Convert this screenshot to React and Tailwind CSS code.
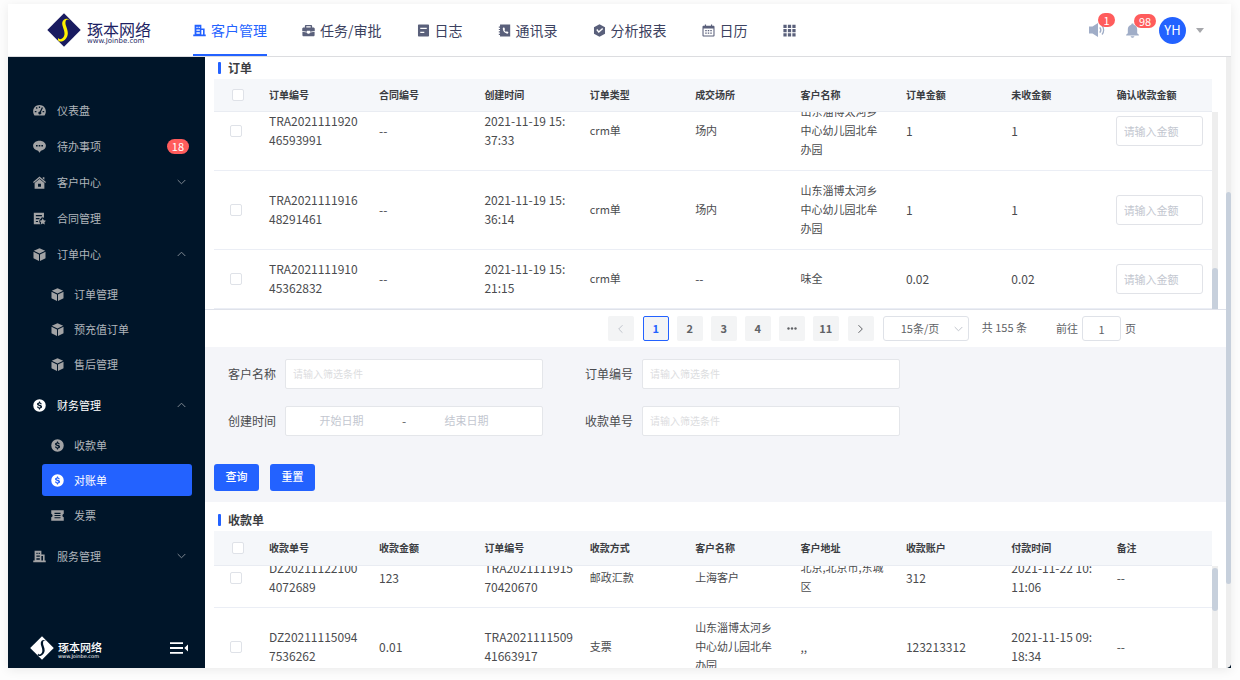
import { useState } from 'react';

const Svg = ({ size = 13, className = '', children }) => (
  <svg width={size} height={size} viewBox="0 0 16 16" fill="currentColor" className={`shrink-0 ${className}`} aria-hidden="true">{children}</svg>
);

const BuildingIcon = (p) => (
  <Svg {...p}><path fillRule="evenodd" d="M2 .8h8.300V5.500h4V13h1.400v2.200H.3V13H2V.8Zm2.200 2.500V5h1.500V3.300H4.200Zm2.700 0V5h1.500V3.300H6.900ZM4.200 6.800v1.600h4.200V6.800H4.200Zm0 3.500V12h4.200v-1.700H4.200Zm6.100-2.900V13h2v-5.600h-2Z" /></Svg>
);
const BriefcaseIcon = (p) => (
  <Svg {...p}><path fillRule="evenodd" d="M5 1.200h6c.8 0 1.500.7 1.500 1.500v1.600H14c1 0 1.700.7 1.700 1.600v2.700L10 9.600V8.300H6v1.300L.3 8.600V5.900c0-.9.7-1.600 1.700-1.600h1.500V2.700c0-.8.7-1.500 1.500-1.500Zm.3 1.700v1.400h5.400V2.900H5.300Z" /><path d="M.5 9.500 6 10.500c.3 1 1 1.500 2 1.500s1.700-.5 2-1.500l5.500-1v4.100c0 .9-.6 1.500-1.500 1.500H2c-.9 0-1.500-.6-1.500-1.500V9.500Z" /></Svg>
);
const NoteIcon = (p) => (
  <Svg {...p}><path fillRule="evenodd" d="M2.500.6h11c.8 0 1.300.5 1.300 1.300v12.200c0 .8-.5 1.300-1.300 1.300h-11c-.8 0-1.300-.5-1.300-1.300V1.900c0-.8.5-1.300 1.300-1.300ZM4 4.500V6h8V4.500H4Zm0 5V11h5V9.500H4Z" /></Svg>
);
const PhoneBookIcon = (p) => (
  <Svg {...p}><path fillRule="evenodd" d="M2.500.6H15v14.800H2.500v-1.900H1v-1.500h1.500v-1.500H1V9h1.500V7.500H1V6h1.500V4.500H1V3h1.500V.6ZM7.400 4 5.900 5c0 4 2.500 6.700 6 6.900l1-1.600-2-1.400-1.100.8c-1-.5-1.700-1.300-2-2.300l1-.9L7.400 4Z" /></Svg>
);
const ReportIcon = (p) => (
  <Svg {...p}><path fillRule="evenodd" d="M8 .3 14.800 4v8L8 15.700 1.200 12V4L8 .3Zm-4 7L7 11l5.500-5-1.200-1.100L7.200 8.500 5.400 6.300 4 7.300Z" /></Svg>
);
const CalendarIcon = (p) => (
  <Svg {...p}>
    <path fillRule="evenodd" d="M3.500.5H5V2h6V.5h1.500V2H14c.8 0 1.400.6 1.400 1.400V14c0 .8-.6 1.400-1.400 1.400H2C1.200 15.400.6 14.800.6 14V3.400C.6 2.600 1.200 2 2 2h1.500V.5ZM1.900 5.600v8.500h12.200V5.600H1.900Z" />
    <path d="M4 7.300h1.800v1.500H4zm3.100 0h1.800v1.500H7.100zm3.100 0H12v1.500h-1.800zM4 10.600h1.800v1.500H4zm3.100 0h1.800v1.500H7.100zm3.100 0H12v1.500h-1.800z" />
  </Svg>
);
const GridIcon = (p) => (
  <Svg {...p}><path d="M.5.8h4v4h-4zM6 .8h4v4H6zM11.500.8h4v4h-4zM.5 6.100h4v4h-4zM6 6.100h4v4H6zM11.500 6.100h4v4h-4zM.5 11.400h4v4h-4zM6 11.400h4v4H6zM11.500 11.400h4v4h-4z" /></Svg>
);
const DashboardIcon = (p) => (
  <Svg {...p}>
    <path fillRule="evenodd" d="M8 1.200c4.400 0 7.800 3.400 7.800 7.800 0 1.900-.6 3.600-1.600 5H1.800C.8 12.600.2 10.900.2 9 .2 4.600 3.600 1.200 8 1.200ZM7.200 3v2h1.600V3H7.200ZM3.400 4.800l1.300 1.300 1.100-1.100-1.300-1.300-1.100 1.100ZM2.200 8.500v1.600h2V8.500h-2Zm9.600 0v1.600h2V8.500h-2ZM10.900 4l-2.500 5.100a1.900 1.900 0 1 0 1.400.6L12.300 4.700 10.900 4Z" />
  </Svg>
);
const ChatIcon = (p) => (
  <Svg {...p}><path fillRule="evenodd" d="M8 .8c4.400 0 7.900 2.700 7.900 6.200 0 3.100-2.600 5.500-6.200 6.100L8 15.600l-1.700-2.500C2.700 12.500.1 10.100.1 7 .1 3.500 3.600.8 8 .8ZM3.700 6v2h2V6h-2ZM7 6v2h2V6H7Zm3.300 0v2h2V6h-2Z" /></Svg>
);
const HomeIcon = (p) => (
  <Svg {...p}><path d="M8 .5 16 7.300l-1 1.200L8 2.700 1 8.500 0 7.300 8 .5ZM12 1.500h2v3.200l-2-1.600V1.500Z" /><path fillRule="evenodd" d="m8 3.800 6 4.900v6.900H2V8.700l6-4.900ZM6.200 9.500v3.700h3.600V9.500H6.200Z" /></Svg>
);
const ContractIcon = (p) => (
  <Svg {...p}><path fillRule="evenodd" d="M1 .8h12.500v6.400L11 6.600 7.800 10v2l1 3.200H1V.8Zm2.500 3v1.400H11V3.800H3.500Zm0 3.600v1.400H8V7.400H3.500Zm0 3.600v1.400h2.700V11H3.500Z" /><path d="m12 7.800 1.300 2.500 2.700.4-1.900 2 .4 2.700-2.500-1.200-2.500 1.200.4-2.700-1.900-2 2.700-.4L12 7.800Z" /></Svg>
);
const CubeIcon = (p) => (
  <Svg {...p}><path d="m8 .2 7 3.100-7 3.500-7-3.500L8 .2ZM.6 4.500l6.800 3.400v8L.6 12.500v-8Zm14.800 0v8l-6.800 3.400v-8l6.800-3.400Z" /></Svg>
);
const CoinIcon = (p) => (
  <Svg {...p}><path fillRule="evenodd" d="M8 .3a7.700 7.700 0 1 1 0 15.400A7.700 7.700 0 0 1 8 .3Zm-.7 2.900v1C5.900 4.400 5 5.200 5 6.300c0 1.200.9 1.800 2.500 2.200 1.300.3 1.700.6 1.700 1.100s-.5.8-1.200.8c-.9 0-1.400-.4-1.500-1.100H4.900c.1 1.300 1 2.100 2.400 2.400v1.100h1.400v-1.100c1.500-.2 2.400-1 2.400-2.200 0-1.300-.9-1.900-2.700-2.300-1.100-.3-1.500-.5-1.500-1s.4-.7 1.100-.7c.8 0 1.200.3 1.300.9h1.600c-.1-1.100-.9-1.900-2.200-2.200v-1H7.300Z" /></Svg>
);
const TicketIcon = (p) => (
  <Svg {...p}><path fillRule="evenodd" d="M.3 1.500h15.400v4.300a2.300 2.300 0 0 0 0 4.400v4.300H.3v-4.300a2.300 2.300 0 0 0 0-4.400V1.500Zm4 3.200v1.400h7.400V4.700H4.300Zm0 2.700v1.300h7.400V7.400H4.300Zm0 2.700v1.400h7.400v-1.400H4.300Z" /></Svg>
);
const SpeakerIcon = () => (
  <Svg size={16}><path d="M0 4.500h3.500L9 1v14l-5.500-3.500H0v-7Z" /><path fill="none" stroke="currentColor" strokeWidth="1.300" d="M10.800 5.300c1.200 1.500 1.200 3.900 0 5.400M13 3.500c2.200 2.500 2.200 6.500 0 9" /></Svg>
);
const BellIcon = () => (
  <Svg size={15}><path d="M8 .5c.8 0 1.300.5 1.300 1.300C11.800 2.400 13 4.300 13 6.700V11l1.800 1.500v.8H1.200v-.8L3 11V6.700c0-2.400 1.200-4.300 3.700-4.900C6.700 1 7.200.5 8 .5ZM6 14h4c-.3 1-1 1.600-2 1.600S6.300 15 6 14Z" /></Svg>
);
const FoldIcon = () => (
  <svg width="18" height="12" viewBox="0 0 18 12" fill="currentColor" aria-hidden="true"><path d="M0 .2h13v1.800H0zM0 5.100h13v1.800H0zM0 10h13v1.800H0zM18 2.500v7L14.300 6 18 2.500Z" /></svg>
);
const DotsIcon = () => (
  <svg width="10" height="3" viewBox="0 0 10 3" fill="currentColor" className="mx-auto" aria-hidden="true"><circle cx="1.500" cy="1.500" r="1.200" /><circle cx="5" cy="1.500" r="1.200" /><circle cx="8.500" cy="1.500" r="1.200" /></svg>
);
const Chevron = ({ up, className = '' }) => (
  <svg width="9" height="6" viewBox="0 0 9 6" fill="none" stroke="currentColor" className={className} aria-hidden="true">
    <path d={up ? 'M.7 5 4.500 1.200 8.300 5' : 'M.7 1 4.500 4.800 8.300 1'} />
  </svg>
);

const LogoMark = ({ size, bg, ink }) => (
  <svg width={size} height={size} viewBox="0 0 34 34" className="shrink-0" aria-hidden="true">
    <path fill={bg} d="M17 .3 33.700 17 17 33.700.3 17Z" />
    <path fill={ink} d="M22.800 7.500C21 4.600 16.300 5 15.300 9.200c-.8 3.300 2.600 7.700 2.200 12-.3 3.100-2.600 5.300-4.800 4.900-.6-.1-.9-.6-.8-1.300-1.300 1-1.400 3.200.6 3.600 4 .8 8-3.200 8.300-7.700.3-4.600-3-8.600-2.300-12 .4-2.200 2.400-3 4.300-1.200Z" />
  </svg>
);

const navItems = [
  ['客户管理', BuildingIcon], ['任务/审批', BriefcaseIcon], ['日志', NoteIcon],
  ['通讯录', PhoneBookIcon], ['分析报表', ReportIcon], ['日历', CalendarIcon],
];

const menu = [
  { label: '仪表盘', icon: DashboardIcon },
  { label: '待办事项', icon: ChatIcon, badge: 18 },
  { label: '客户中心', icon: HomeIcon, arrow: 'down' },
  { label: '合同管理', icon: ContractIcon },
  { label: '订单中心', icon: CubeIcon, arrow: 'up', children: [['订单管理', CubeIcon], ['预充值订单', CubeIcon], ['售后管理', CubeIcon]] },
  { label: '财务管理', icon: CoinIcon, arrow: 'up', open: true, children: [['收款单', CoinIcon], ['对账单', CoinIcon], ['发票', TicketIcon]] },
  { label: '服务管理', icon: BuildingIcon, arrow: 'down' },
];

const orderHead = ['订单编号', '合同编号', '创建时间', '订单类型', '成交场所', '客户名称', '订单金额', '未收金额', '确认收款金额'];
const school = '山东淄博太河乡\n中心幼儿园北牟\n办园';
const orders = [
  ['TRA2021111920\n46593991', '--', '2021-11-19 15:\n37:33', 'crm单', '场内', school, '1', '1'],
  ['TRA2021111916\n48291461', '--', '2021-11-19 15:\n36:14', 'crm单', '场内', school, '1', '1'],
  ['TRA2021111910\n45362832', '--', '2021-11-19 15:\n21:15', 'crm单', '--', '味全', '0.02', '0.02'],
];

const receiptHead = ['收款单号', '收款金额', '订单编号', '收款方式', '客户名称', '客户地址', '收款账户', '付款时间', '备注'];
const receipts = [
  ['DZ20211122100\n4072689', '123', 'TRA2021111915\n70420670', '邮政汇款', '上海客户', '北京,北京市,东城\n区', '312', '2021-11-22 10:\n11:06', '--'],
  ['DZ20211115094\n7536262', '0.01', 'TRA2021111509\n41663917', '支票', school, ',,', '123213312', '2021-11-15 09:\n18:34', '--'],
];

const isLatin = (s) => !/[\u4e00-\u9fa5]/.test(s);

function Cols() {
  return (
    <colgroup>
      <col className="w-[45px]" />
      <col className="w-[110px]" />
      {Array.from({ length: 8 }, (_, i) => <col key={i} />)}
    </colgroup>
  );
}

function Check({ label }) {
  return <input type="checkbox" aria-label={label} className="block size-3 appearance-none rounded-[2px] border border-[#dfe2e8] bg-white checked:bg-[#2362ff]" />;
}

function TableHead({ head, className }) {
  return (
    <div className="pr-[6px]">
      <table className="w-full table-fixed border-separate border-spacing-0 bg-[#f5f7fa]">
        <Cols />
        <thead>
          <tr>
            <th className={`border-b border-[#e9ecf2] pl-[18px] ${className}`}><Check label="全选" /></th>
            {head.map(h => <th key={h} className="border-b border-[#e9ecf2] pb-[2px] pl-[10px] text-left text-[10px] font-bold text-[#3b3d42]">{h}</th>)}
          </tr>
        </thead>
      </table>
    </div>
  );
}

function TableBody({ rows, amount, className }) {
  return (
    <table className={`w-full table-fixed border-separate border-spacing-0 ${className}`}>
      <Cols />
      <tbody>
        {rows.map(row => (
          <tr key={row[0]} className={row.includes(school) ? 'h-[79px]' : 'h-[59px]'}>
            <td className="border-b border-[#ebeef5] pl-4"><Check label={row[0]} /></td>
            {row.map((cell, i) => (
              <td key={i} className={`whitespace-pre border-b border-[#ebeef5] pb-[2px] pl-[10px] leading-[19px] text-[#4a4b4e] ${isLatin(cell) ? 'text-[12px]' : 'text-[11px]'}`}>{cell}</td>
            ))}
            {amount && (
              <td className="border-b border-[#ebeef5] px-[9px]">
                <input aria-label="确认收款金额" placeholder="请输入金额" className="block h-[30px] w-full rounded-[3px] border border-[#e1e3e8] px-[7px] text-[11px] outline-none placeholder:text-[#c3c7d0]" />
              </td>
            )}
          </tr>
        ))}
      </tbody>
    </table>
  );
}

function Title({ children }) {
  return (
    <h2 className="flex h-[22px] items-center gap-[7px] pl-[13px] text-[12px] font-bold text-[#3b3d42]">
      <span className="h-3 w-[3px] rounded-[1px] bg-[#2362ff]" />{children}
    </h2>
  );
}

function Sidebar({ active, onSelect }) {
  return (
    <aside className="flex w-[197px] shrink-0 flex-col rounded-bl-[5px] bg-[#001529] text-[11px] text-[#b0b5bb]">
      <nav className="flex-1 pt-[35px]">
        {menu.map(({ label, icon: Icon, badge, arrow, open, children }) => (
          <div key={label}>
            <button className={`flex h-9 w-full items-center gap-[11px] pr-4 pl-[25px] ${open ? 'text-white' : ''}`}>
              <Icon className={open ? 'text-white' : 'text-[#a2a3a5]'} />
              <span className="flex-1 text-left">{label}</span>
              {badge && <span className="h-[15px] rounded-full bg-[#ff5c5c] px-[5px] text-[11px] leading-[15px] text-white">{badge}</span>}
              {arrow && <Chevron up={arrow === 'up'} className="mr-[3px] text-[#7d8791]" />}
            </button>
            {children && (
              <div className="flex flex-col gap-[3px] pt-[6px] pr-[13px] pb-[7px] pl-[34px]">
                {children.map(([name, Sub]) => (
                  <button key={name} onClick={() => onSelect(name)}
                    className={`flex h-8 items-center gap-[10px] rounded-[3px] pl-[9px] ${active === name ? 'bg-[#2362ff] text-white' : ''}`}>
                    <Sub className={active === name ? 'text-white' : 'text-[#a2a3a5]'} />{name}
                  </button>
                ))}
              </div>
            )}
          </div>
        ))}
      </nav>
      <div className="flex h-10 items-center gap-1 pr-[17px] pl-[22px] text-white">
        <LogoMark size={24} bg="#ffffff" ink="#001529" />
        <div className="flex-1 pt-[3px]">
          <div className="text-[11px] leading-[12px] font-medium">琢本网络</div>
          <div className="font-['DejaVu_Sans',sans-serif] text-[5px] leading-[6px]">www.Joinbe.com</div>
        </div>
        <button aria-label="收起菜单"><FoldIcon /></button>
      </div>
    </aside>
  );
}

function Header() {
  return (
    <header className="flex h-[53px] shrink-0 items-center border-b border-[#dcdde0] bg-white">
      <a href="#home" className="flex w-[185px] shrink-0 items-center gap-[6px] pl-[39px] text-[#1d1f63]">
        <LogoMark size={34} bg="#191b60" ink="#fff200" />
        <div className="pt-[6px]">
          <div className="text-[16px] leading-[16px]">琢本网络</div>
          <div className="font-['DejaVu_Sans',sans-serif] text-[7px] leading-[9px]">www.Joinbe.com</div>
        </div>
      </a>
      <nav className="flex h-full flex-1 gap-[35px] text-[14px] text-[#3c4260]">
        {navItems.map(([label, Icon], i) => (
          <a key={label} href="#nav" className={`flex items-center gap-[5px] border-b-2 pt-[2px] whitespace-nowrap ${i === 0 ? 'border-[#2362ff] text-[#2362ff]' : 'border-transparent'}`}>
            <Icon className={i === 0 ? '' : 'text-[#5a607b]'} />{label}
          </a>
        ))}
        <button aria-label="更多应用" className="text-[#5a607b]"><GridIcon /></button>
      </nav>
      <div className="flex items-center pr-[27px] text-[#a0adc7]">
        <button aria-label="公告" className="relative mr-5">
          <SpeakerIcon />
          <span className="absolute -top-[9px] left-[9px] h-[14px] w-[17px] rounded-full bg-[#ff5c5c] text-center text-[11px] leading-[14px] text-white">1</span>
        </button>
        <button aria-label="通知" className="relative mr-[19px]">
          <BellIcon />
          <span className="absolute -top-[9px] left-[9px] h-[14px] w-[22px] rounded-full bg-[#ff5c5c] text-center text-[11px] leading-[14px] text-white">98</span>
        </button>
        <button className="flex items-center gap-[10px]">
          <span className="flex size-[27px] items-center justify-center rounded-full bg-[#2362ff] text-[13px] text-white">YH</span>
          <svg width="8" height="5" viewBox="0 0 8 5" fill="#a6a7ab" aria-hidden="true"><path d="M0 0h8L4 5Z" /></svg>
        </button>
      </div>
    </header>
  );
}

function Pagination() {
  const [page, setPage] = useState('1');
  const arrow = 'flex h-[25px] w-[26px] items-center justify-center rounded-[2px] bg-[#f3f4f5]';
  return (
    <div className="flex h-[38px] items-center justify-end gap-[9px] border-t border-[#dfe2ea] pr-[90px] text-[11px] text-[#606266]">
      <button aria-label="上一页" className={`${arrow} text-[#c0c4cc]`}><Chevron className="rotate-90" /></button>
      <div className="flex gap-2">
        {['1', '2', '3', '4', 'more', '11'].map(n => (
          <button key={n} onClick={() => setPage(n)} aria-label={n === 'more' ? '更多页' : undefined}
            className={`h-[25px] w-[26px] rounded-[2px] border bg-[#f3f4f5] pb-px font-bold ${page === n ? 'border-[#2362ff] text-[#2362ff]' : 'border-transparent'}`}>{n === 'more' ? <DotsIcon /> : n}</button>
        ))}
      </div>
      <button aria-label="下一页" className={arrow}><Chevron className="-rotate-90" /></button>
      <div className="relative">
        <select aria-label="每页条数" className="block h-[25px] w-[86px] appearance-none rounded-[3px] border border-[#dfe2e8] bg-white pl-[17px] text-[11px]">
          <option>15条/页</option>
          <option>30条/页</option>
        </select>
        <Chevron className="pointer-events-none absolute top-[10px] right-[6px] text-[#c0c4cc]" />
      </div>
      <span className="mr-5 ml-1 pb-[2px]">共 155 条</span>
      <label className="flex items-center gap-1">
        前往
        <input defaultValue="1" className="h-[25px] w-[39px] rounded-[3px] border border-[#dfe2e8] text-center text-[11px]" />
        页
      </label>
    </div>
  );
}

function Field({ id, label }) {
  return (
    <div className="flex items-center gap-[9px]">
      <label htmlFor={id} className="w-12 text-[12px] text-[#4a4b4e]">{label}</label>
      <input id={id} placeholder="请输入筛选条件" className="h-[30px] w-[258px] rounded-[2px] border border-[#e4e6ea] bg-white px-[7px] pb-[2px] text-[10px] outline-none placeholder:text-[#dcdde0]" />
    </div>
  );
}

function Filters() {
  const date = 'w-[111px] pb-[2px] text-center text-[11px] outline-none placeholder:text-[#c3c7d0]';
  return (
    <form className="bg-[#f4f5f9] pt-3 pb-[11px]" onSubmit={e => e.preventDefault()}>
      <div className="grid grid-cols-[315px_315px] gap-x-[42px] gap-y-[17px] pl-[23px]">
        <Field id="customer" label="客户名称" />
        <Field id="orderNo" label="订单编号" />
        <div className="flex items-center gap-[9px]">
          <label htmlFor="startDate" className="w-12 text-[12px] text-[#4a4b4e]">创建时间</label>
          <div className="flex h-[30px] w-[258px] items-center rounded-[2px] border border-[#e4e6ea] bg-white">
            <input id="startDate" placeholder="开始日期" className={date} />
            <span className="w-[14px] text-center text-[12px] text-[#606266]">-</span>
            <input aria-label="结束日期" placeholder="结束日期" className={date} />
          </div>
        </div>
        <Field id="receiptNo" label="收款单号" />
      </div>
      <div className="mt-7 flex gap-[11px] pl-[9px] text-[11px] font-medium text-white">
        <button type="submit" className="h-[27px] w-[45px] rounded-[3px] bg-[#2362ff] pb-[2px]">查询</button>
        <button type="reset" className="h-[27px] w-[45px] rounded-[3px] bg-[#2362ff] pb-[2px]">重置</button>
      </div>
    </form>
  );
}

export default function App() {
  const [active, setActive] = useState('对账单');

  return (
    <div className="h-screen bg-[#fdfdfd] pt-1 pr-[9px] pb-3 pl-2 font-['Noto_Sans_CJK_SC',sans-serif]">
      <div className="flex h-full flex-col shadow-[0_2px_10px_rgba(0,0,0,0.08)]">
        <Header />
        <div className="flex min-h-0 flex-1 bg-[#001529]">
          <Sidebar active={active} onSelect={setActive} />
          <div className="flex min-w-0 flex-1 overflow-hidden rounded-br-[5px] bg-white">
            <main className="flex min-w-0 flex-1 flex-col">
              <Title>订单</Title>
              <section className="pr-2 pl-[9px]">
                <TableHead head={orderHead} className="h-[33px]" />
                <div className="flex h-[197px] overflow-hidden">
                  <div className="min-w-0 flex-1"><TableBody rows={orders} amount className="-mt-5" /></div>
                  <div className="flex w-[6px] flex-col justify-end bg-[#eeeeee]"><div className="h-[41px] rounded-t-full bg-[#c7d0dc]" /></div>
                </div>
              </section>
              <Pagination />
              <Filters />
              <div className="pt-[7px]"><Title>收款单</Title></div>
              <section className="flex min-h-0 flex-1 flex-col pr-2 pl-[9px]">
                <TableHead head={receiptHead} className="h-[35px]" />
                <div className="flex min-h-0 flex-1 overflow-hidden">
                  <div className="min-w-0 flex-1"><TableBody rows={receipts} className="-mt-[17px]" /></div>
                  <div className="w-[6px] bg-[#eeeeee] pt-[2px]"><div className="h-[43px] rounded-full bg-[#c7d0dc]" /></div>
                </div>
              </section>
            </main>
            <div className="w-[5px] shrink-0 bg-[#eeeeee] pt-[135px]"><div className="h-[392px] rounded-full bg-[#c7d0dc]" /></div>
          </div>
        </div>
      </div>
    </div>
  );
}
